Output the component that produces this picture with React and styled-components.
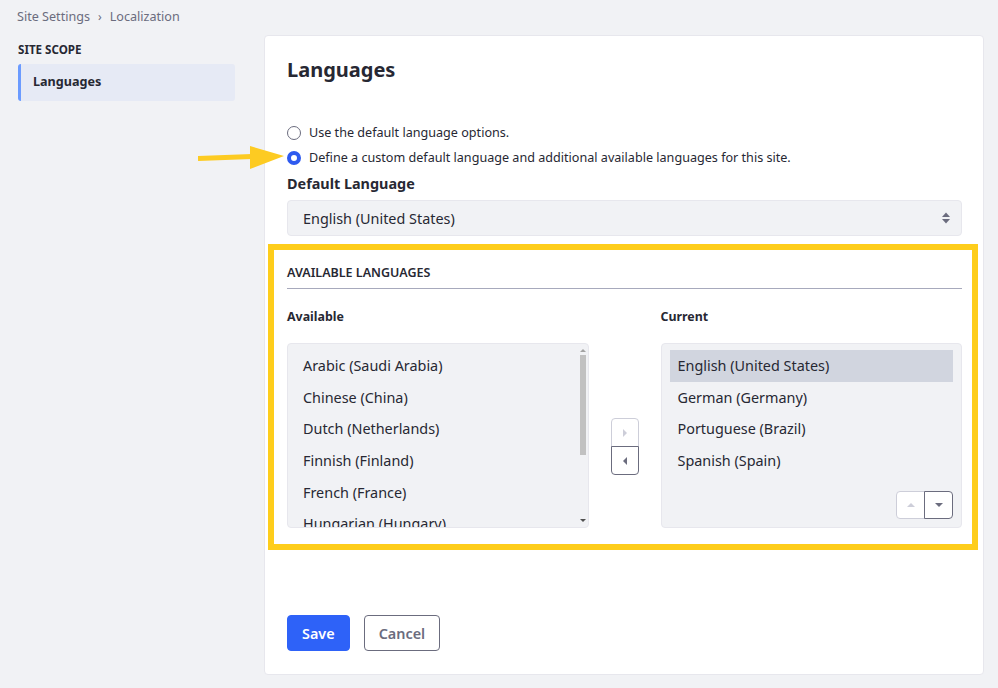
import React from "react"
import styled, { createGlobalStyle } from "styled-components"

const GlobalStyle = createGlobalStyle`
  body {
    margin: 0;
    background: #f1f2f5;
    font-family: "Noto Sans", "Liberation Sans", sans-serif;
    color: #272833;
  }
`

const available = ["Arabic (Saudi Arabia)", "Chinese (China)", "Dutch (Netherlands)", "Finnish (Finland)", "French (France)", "Hungarian (Hungary)"]
const current = ["English (United States)", "German (Germany)", "Portuguese (Brazil)", "Spanish (Spain)"]

const Page = styled.div`
  width: 998px;
  height: 688px;
  padding: 0 14px 0 18px;
  box-sizing: border-box;
  position: relative;
  overflow: hidden;
`

const Breadcrumb = styled.div`
  display: flex;
  align-items: center;
  gap: 6px;
  height: 32px;
  font-size: 12.6px;
  color: #6b6c7e;
  margin-left: -1px;
`

const Chevron = styled.span`
  font-size: 12px;
  margin: 0 2px;
`

const Layout = styled.div`
  display: grid;
  grid-template-columns: 217px 1fr;
  gap: 29px;
  margin-top: 3px;
`

const Sidebar = styled.div`
  padding-top: 7px;
`

const SideTitle = styled.div`
  font-size: 11.6px;
  font-weight: 700;
  text-transform: uppercase;
  line-height: 16px;
  margin-bottom: 6px;
`

const NavItem = styled.div`
  height: 37px;
  display: flex;
  align-items: center;
  padding: 0 0 2px 12px;
  box-sizing: border-box;
  background: #e6eaf5;
  border-left: 3px solid #6b9bff;
  border-radius: 3px;
  font-size: 12.6px;
  font-weight: 700;
`

const Card = styled.div`
  background: #fff;
  border: 1px solid #e7e7ed;
  border-radius: 4px;
  height: 640px;
  box-sizing: border-box;
  padding: 20px 21px 23px 22px;
  display: flex;
  flex-direction: column;
  position: relative;
`

const Title = styled.h2`
  margin: 0;
  font-size: 20px;
  font-weight: 700;
  line-height: 28px;
`

const RadioGroup = styled.div`
  margin-top: 36px;
  display: flex;
  flex-direction: column;
`

const RadioRow = styled.label`
  display: flex;
  align-items: center;
  gap: 8px;
  height: 25px;
  font-size: 12.6px;
  color: #272833;
`

const RadioDot = styled.span`
  width: 14px;
  height: 14px;
  border-radius: 50%;
  box-sizing: border-box;
  background: #fff;
  border: ${(p) => (p.checked ? "4px solid #2e5aef" : "1px solid #6b6c7e")};
`

const FieldLabel = styled.div`
  font-size: 14.4px;
  font-weight: 700;
  line-height: 22px;
  margin-top: 3px;
`

const Select = styled.div`
  margin-top: 5px;
  height: 36px;
  background: #f1f2f5;
  border: 1px solid #e7e7ed;
  border-radius: 4px;
  box-sizing: border-box;
  display: flex;
  align-items: center;
  justify-content: space-between;
  padding: 0 10px 0 15px;
  font-size: 14.4px;
`

const Highlight = styled.div`
  margin: 8px -16px 0 -19px;
  border: 6px solid #fecd1b;
  padding: 15px 10px 16px 13px;
`

const SectionHead = styled.div`
  font-size: 12.5px;
  font-weight: 600;
  text-transform: uppercase;
  line-height: 16px;
  padding-bottom: 7px;
  border-bottom: 1px solid #a7a9bc;
`

const Columns = styled.div`
  display: grid;
  grid-template-columns: 1fr 72px 1fr;
  margin-top: 20px;
`

const Col = styled.div`
  display: flex;
  flex-direction: column;
`

const ColLabel = styled.div`
  font-size: 12.4px;
  font-weight: 700;
  line-height: 16px;
  height: 16px;
  margin-bottom: 18px;
`

const ListBox = styled.div`
  height: 185px;
  background: #f1f2f5;
  border: 1px solid #e7e7ed;
  border-radius: 4px;
  box-sizing: border-box;
  display: flex;
  overflow: hidden;
`

const ListItems = styled.div`
  flex: 1;
  padding: 6px 8px 0 8px;
  display: flex;
  flex-direction: column;
  overflow: hidden;
`

const Item = styled.div`
  height: 31.6px;
  flex-shrink: 0;
  display: flex;
  align-items: center;
  padding-left: ${(p) => p.indent}px;
  font-size: 14.4px;
  color: #272833;
  white-space: nowrap;
  background: ${(p) => (p.selected ? "#d1d5df" : "transparent")};
`

const ScrollTrack = styled.div`
  width: 10px;
  display: flex;
  flex-direction: column;
  align-items: center;
  padding: 2px 0;
  box-sizing: border-box;
`

const ScrollArrow = styled.div`
  width: 0;
  height: 0;
  border-left: 3px solid transparent;
  border-right: 3px solid transparent;
  ${(p) => (p.down ? "border-top: 3px solid #505050;" : "border-bottom: 3px solid #a3a3a3;")}
  margin: 3px 0;
`

const ScrollThumb = styled.div`
  width: 6px;
  height: 100px;
  background: #c1c1c1;
`

const ScrollSpace = styled.div`
  flex: 1;
`

const MoveCol = styled.div`
  display: flex;
  justify-content: center;
  padding-top: 109px;
`

const BtnStack = styled.div`
  display: flex;
  flex-direction: column;
  align-self: flex-start;
`

const IconBtn = styled.div`
  width: ${(p) => p.w || 28}px;
  height: ${(p) => p.h || 28}px;
  box-sizing: border-box;
  border: 1px solid ${(p) => (p.disabled ? "#cdced9" : "#6b6c7e")};
  background: #fff;
  display: flex;
  align-items: center;
  justify-content: center;
  border-radius: ${(p) => p.radius};
  margin-top: ${(p) => (p.stacked ? "-1px" : "0")};
  margin-left: ${(p) => (p.joined ? "-1px" : "0")};
`

const CurrentBox = styled(ListBox)`
  flex-direction: column;
`

const CurrentItems = styled(ListItems)`
  flex: none;
`

const OrderBar = styled.div`
  margin-top: auto;
  align-self: flex-end;
  display: flex;
  padding: 0 8px 8px 0;
`

const Actions = styled.div`
  margin-top: auto;
  display: flex;
  gap: 14px;
`

const Button = styled.button`
  height: 36px;
  box-sizing: border-box;
  border-radius: 4px;
  font-family: inherit;
  font-size: 14.4px;
  font-weight: 600;
  padding: 0 14px;
  border: 1px solid ${(p) => (p.primary ? "#2e62f8" : "#6b6c7e")};
  background: ${(p) => (p.primary ? "#2e62f8" : "#fff")};
  color: ${(p) => (p.primary ? "#fff" : "#6b6c7e")};
`

const Pointer = styled.svg`
  position: absolute;
  left: -67px;
  top: 107px;
`

const Tri = ({ dir, color }) => {
  const pts = {
    right: "2,0 6,4 2,8",
    left: "6,0 2,4 6,8",
    up: "0,6 4,2 8,6",
    down: "0,2 8,2 4,6",
  }[dir]
  return (
    <svg width="8" height="8" viewBox="0 0 8 8">
      <polygon points={pts} fill={color} />
    </svg>
  )
}

export default function App() {
  return (
    <Page>
      <GlobalStyle />
      <Breadcrumb>
        <span>Site Settings</span>
        <Chevron>›</Chevron>
        <span>Localization</span>
      </Breadcrumb>
      <Layout>
        <Sidebar>
          <SideTitle>Site Scope</SideTitle>
          <NavItem>Languages</NavItem>
        </Sidebar>
        <Card>
          <Pointer width="90" height="30" viewBox="0 0 90 30">
            <path d="M0 15.5 L54 13.5" stroke="#fdcb22" strokeWidth="5" />
            <polygon points="52,3 86,13 52,26" fill="#fdcb22" />
          </Pointer>
          <Title>Languages</Title>
          <RadioGroup>
            <RadioRow>
              <RadioDot />
              Use the default language options.
            </RadioRow>
            <RadioRow>
              <RadioDot checked />
              Define a custom default language and additional available languages for this site.
            </RadioRow>
          </RadioGroup>
          <FieldLabel>Default Language</FieldLabel>
          <Select>
            <span>English (United States)</span>
            <svg width="10" height="14" viewBox="0 0 10 14">
              <polygon points="1,6 5,1.5 9,6" fill="#6b6c7e" />
              <polygon points="1,8 9,8 5,12.5" fill="#6b6c7e" />
            </svg>
          </Select>
          <Highlight>
            <SectionHead>Available Languages</SectionHead>
            <Columns>
              <Col>
                <ColLabel>Available</ColLabel>
                <ListBox>
                  <ListItems>
                    {available.map((l) => (
                      <Item key={l} indent={7}>{l}</Item>
                    ))}
                  </ListItems>
                  <ScrollTrack>
                    <ScrollArrow />
                    <ScrollThumb />
                    <ScrollSpace />
                    <ScrollArrow down />
                  </ScrollTrack>
                </ListBox>
              </Col>
              <MoveCol>
                <BtnStack>
                  <IconBtn disabled h={29} radius="4px 4px 0 0">
                    <Tri dir="right" color="#cdced9" />
                  </IconBtn>
                  <IconBtn stacked h={29} radius="0 0 4px 4px">
                    <Tri dir="left" color="#6b6c7e" />
                  </IconBtn>
                </BtnStack>
              </MoveCol>
              <Col>
                <ColLabel>Current</ColLabel>
                <CurrentBox>
                  <CurrentItems>
                    {current.map((l, i) => (
                      <Item key={l} indent={8} selected={i === 0}>{l}</Item>
                    ))}
                  </CurrentItems>
                  <OrderBar>
                    <IconBtn disabled w={29} radius="4px 0 0 4px">
                      <Tri dir="up" color="#cdced9" />
                    </IconBtn>
                    <IconBtn joined w={29} radius="0 4px 4px 0">
                      <Tri dir="down" color="#6b6c7e" />
                    </IconBtn>
                  </OrderBar>
                </CurrentBox>
              </Col>
            </Columns>
          </Highlight>
          <Actions>
            <Button primary>Save</Button>
            <Button>Cancel</Button>
          </Actions>
        </Card>
      </Layout>
    </Page>
  )
}
